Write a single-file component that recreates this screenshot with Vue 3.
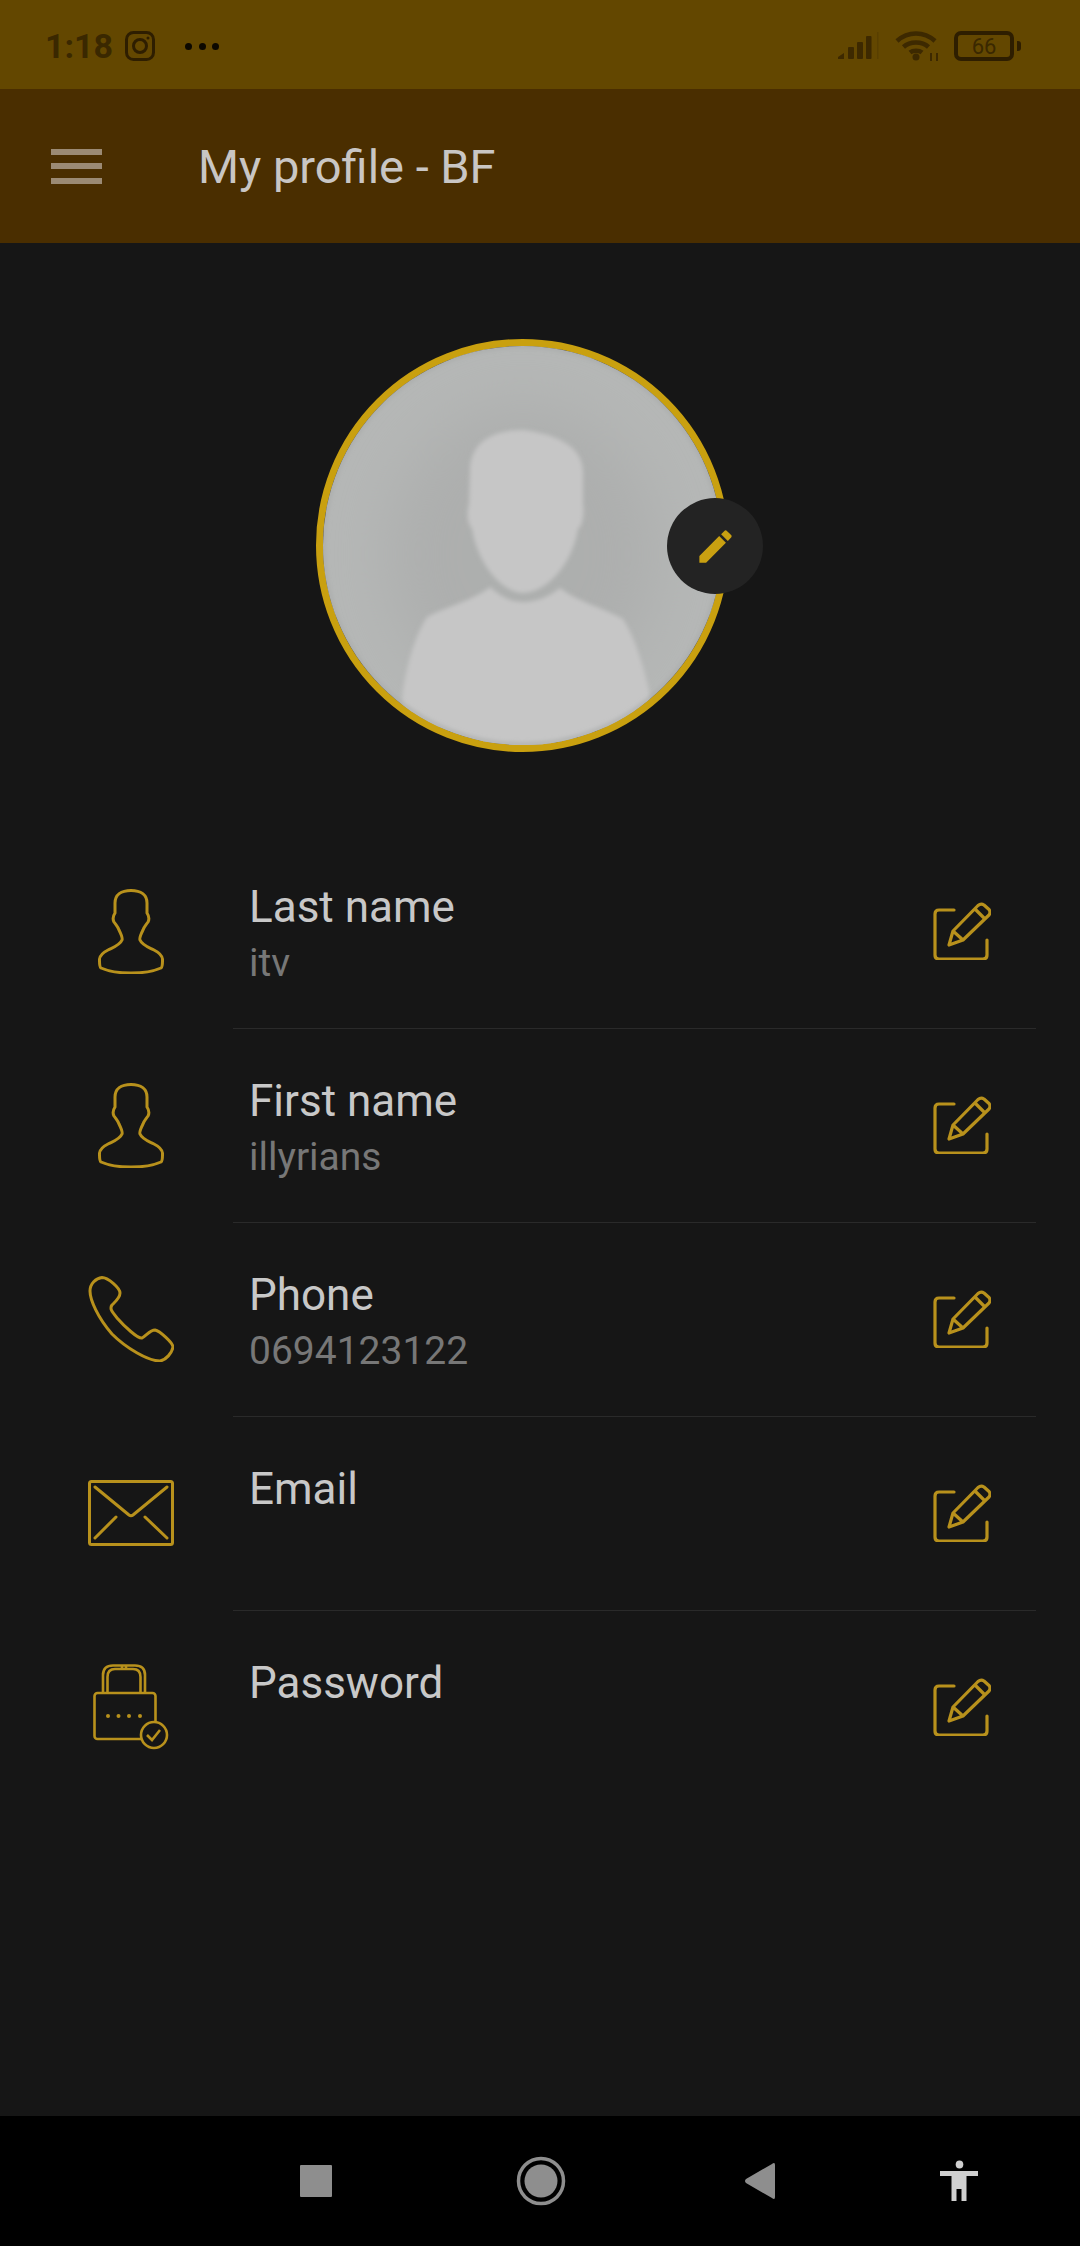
<template>
  <div class="screen">
    <!-- status bar -->
    <div class="status-bar">
      <div class="status-left">
        <span class="time">1:18</span>
        <svg class="insta" width="30" height="30" viewBox="0 0 30 30" fill="none" stroke="#2e1e00" stroke-width="3">
          <rect x="1.5" y="1.5" width="27" height="27" rx="7" />
          <circle cx="15" cy="15" r="6.5" />
          <circle cx="23" cy="7" r="1.5" fill="#2e1e00" stroke="none" />
        </svg>
        <span class="dots"><i></i><i></i><i></i></span>
      </div>
      <div class="status-right">
        <svg width="42" height="28" viewBox="0 0 42 28" fill="#3d2900">
          <path d="M0 25 L6 21 V27 H0 Z" />
          <rect x="10" y="15" width="6" height="12" rx="1" />
          <rect x="19" y="10" width="6" height="17" rx="1" />
          <rect x="28" y="4" width="5.500" height="23" rx="1" />
          <rect x="39" y="0" width="1.500" height="27" opacity="0.25" />
        </svg>
        <svg class="wifi" width="44" height="30" viewBox="0 0 44 30" fill="none" stroke="#3d2900" stroke-width="4.500">
          <path d="M2 10 C13 0 29 0 40 10" />
          <path d="M8.500 16 C15 10 27 10 33.500 16" />
          <path d="M15 21.500 C18 19 24 19 27 21.500" />
          <circle cx="21" cy="26" r="3.500" fill="#3d2900" stroke="none" />
          <path d="M36 30 V22 M42 30 V22" stroke-width="2" />
        </svg>
        <div class="battery"><span>66</span></div>
        <div class="battery-nub"></div>
      </div>
    </div>

    <!-- app bar -->
    <div class="app-bar">
      <div class="menu"><i></i><i></i><i></i></div>
      <span class="title">My profile - BF</span>
    </div>

    <div class="content">
      <div class="avatar">
        <div class="avatar-img">
          <svg width="399" height="399" viewBox="7 7 399 399">
            <defs>
              <filter id="soft"><feGaussianBlur stdDeviation="2.200" /></filter>
              <filter id="softer" x="-40%" y="-40%" width="180%" height="180%"><feGaussianBlur stdDeviation="30" /></filter>
            </defs>
            <rect x="0" y="0" width="413" height="413" fill="#b5b7b6" />
            <ellipse cx="207" cy="215" rx="135" ry="150" fill="#adafae" filter="url(#softer)" />
            <g fill="#c6c6c6" filter="url(#soft)">
              <path d="M207 91 C178 91 154 102 154 132 L153 165 C150 175 152 185 156 190 C162 225 185 253 207 254 C232 253 256 225 262 190 C268 185 268 170 267 165 L267 132 C266 107 240 95 207 91 Z" />
              <path d="M174 248 C185 258 195 263 207 263 C222 263 235 256 244 249 C260 262 285 268 307 280 C320 300 328 330 333 351 L340 420 L80 420 L87 351 C92 320 100 295 111 278 C130 268 160 260 174 248 Z" />
            </g>
            <circle cx="206.500" cy="206.500" r="199" fill="none" stroke="#a9abaa" stroke-width="3" filter="url(#soft)" />
          </svg>
        </div>
        <button class="avatar-edit">
          <svg width="43" height="43" viewBox="0 0 24 24" fill="#c9a011">
            <path d="M3 17.250V21h3.750L17.810 9.940l-3.750-3.750L3 17.250zM20.710 7.040c.39-.39.39-1.020 0-1.410l-2.340-2.340c-.39-.39-1.020-.39-1.410 0l-1.830 1.830 3.750 3.750 1.830-1.830z" />
          </svg>
        </button>
      </div>

      <!-- profile fields -->
      <div class="field-list">
        <div v-for="field in fields" :key="field.label" class="field">
          <div class="field-icon">
            <svg v-if="field.icon === 'person'" width="66" height="85" viewBox="0 0 66 85" class="line-icon" stroke-width="3">
              <path d="M33 1.500 C23 1.500 17 6 17 14 L17 24 C15 27 15 31 16 33 C18 36 20 38 21 41 C23 45 25 49 24 51 C22 56 16 58 10 61 C4 64 1 68 1.500 72 C1.500 76 1.500 78 3 79 C12 83 22 84 33 84 C44 84 54 83 63 79 C64.500 78 64.500 76 64.500 72 C65 68 62 64 56 61 C50 58 44 56 42 51 C41 49 43 45 45 41 C46 38 48 36 50 33 C51 31 51 27 49 24 L49 14 C49 6 43 1.500 33 1.500 Z" />
            </svg>
            <svg v-else-if="field.icon === 'phone'" width="86" height="86" viewBox="0 0 86 86" class="line-icon" stroke-width="3">
              <path d="M14 1.500 C8 2 2 8 2 15 C2 24 10 42 24 58 C38 72 60 85 72 85 C78 84 84 77 85 71 C85 67 72 55 67 54 C62 54 58 60 54 62 C50 63 36 50 30 43 C25 37 21 33 24 29 C27 26 32 22 32 17 C32 12 20 1.500 14 1.500 Z" />
            </svg>
            <svg v-else-if="field.icon === 'mail'" width="86" height="66" viewBox="0 0 86 66" class="line-icon" stroke-width="3" stroke-linecap="round">
              <rect x="1.500" y="1.500" width="83" height="63" rx="2" />
              <path d="M7 7 L41 35 Q43 36.500 45 35 L79 7 M7 58 L28 37 M79 58 L57 37" />
            </svg>
            <svg v-else width="76" height="86" viewBox="0 0 76 86" class="line-icon lock" stroke-width="2.600">
              <rect x="1.500" y="29" width="61" height="46" rx="3" />
              <path d="M10 29 V11 Q10 1.500 20 1.500 H42 Q52 1.500 52 11 V29 M14.500 29 V13 Q14.500 5 22 5 H40 Q47.500 5 47.500 13 V29 M29 1.500 V5 M33 1.500 V5" />
              <circle cx="61" cy="71" r="13" class="lock-badge" />
              <path d="M54 71 L59 76 L67 66" />
              <g class="lock-dots">
                <circle cx="15" cy="52" r="2" />
                <circle cx="25.500" cy="52" r="2" />
                <circle cx="36" cy="52" r="2" />
                <circle cx="47" cy="52" r="2" />
              </g>
            </svg>
          </div>
          <div class="field-body">
            <div class="field-text">
              <div class="field-label">{{ field.label }}</div>
              <div class="field-value">{{ field.value }}</div>
            </div>
            <svg class="line-icon field-edit" width="58" height="58" viewBox="0 0 58 58" stroke-width="3.200">
              <path d="M21 8 H6 Q2 8 2 12 V53 Q2 57 6 57 H50 Q54 57 54 53 V38" stroke-linecap="round" />
              <path d="M16 43 L20 29 L45 3.500 Q48 1 51 3 L56 7.500 Q58 10 56 13 L30 38 Z M42 7 L52 17 M20 29 L30 38" stroke-linejoin="round" />
            </svg>
          </div>
        </div>
      </div>
    </div>

    <!-- system nav -->
    <div class="nav-bar">
      <div class="nav-item"><div class="nav-square"></div></div>
      <div class="nav-item">
        <svg width="50" height="50" viewBox="0 0 50 50">
          <circle cx="25" cy="25" r="22.500" fill="none" stroke="#8e8e8e" stroke-width="3.500" />
          <circle cx="25" cy="25" r="16.500" fill="#8e8e8e" />
        </svg>
      </div>
      <div class="nav-item">
        <svg width="32" height="38" viewBox="0 0 32 38" fill="#8e8e8e">
          <path d="M30 1 Q31 1 31 3 V35 Q31 37 30 37 Q29 37 28 36 L2 21 Q0 19 2 17 L28 2 Q29 1 30 1 Z" />
        </svg>
      </div>
      <div class="nav-item">
        <svg width="38" height="42" viewBox="0 0 38 42" fill="#d0d0d0">
          <ellipse cx="19.500" cy="4.500" rx="3.800" ry="4" />
          <path d="M0 11 H38 V16 H26.500 V41 H21.500 V29 H16.500 V41 H11.500 V16 H0 Z" />
        </svg>
      </div>
    </div>
  </div>
</template>

<script setup>
const fields = [
  { icon: 'person', label: 'Last name', value: 'itv' },
  { icon: 'person', label: 'First name', value: 'illyrians' },
  { icon: 'phone', label: 'Phone', value: '0694123122' },
  { icon: 'mail', label: 'Email', value: '' },
  { icon: 'lock', label: 'Password', value: '' },
]
</script>

<style scoped>
.screen {
  width: 1080px;
  height: 2246px;
  display: flex;
  flex-direction: column;
  background: #161616;
  font-family: Roboto, "Liberation Sans", sans-serif;
  overflow: hidden;
}

.status-bar {
  height: 89px;
  flex-shrink: 0;
  background: #634700;
  display: flex;
  justify-content: space-between;
  align-items: center;
  padding: 3px 59px 0 45px;
  box-sizing: border-box;
}

.status-left {
  display: flex;
  align-items: center;
}

.time {
  font-size: 34px;
  font-weight: 700;
  color: #3a2800;
  margin-right: 12px;
}

.insta {
  margin-right: 30px;
}

.dots {
  display: flex;
  gap: 6.500px;
}

.dots i {
  width: 7px;
  height: 7px;
  border-radius: 50%;
  background: #0c0800;
}

.status-right {
  display: flex;
  align-items: center;
}

.wifi {
  margin: 0 15px;
}

.battery {
  width: 60px;
  height: 30px;
  box-sizing: border-box;
  border: 4px solid #2e1e00;
  border-radius: 7px;
  display: flex;
  align-items: center;
  justify-content: center;
  font-size: 22px;
  color: #3a2800;
}

.battery-nub {
  width: 4px;
  height: 10px;
  margin-left: 3px;
  border-radius: 0 3px 3px 0;
  background: #2e1e00;
}

.app-bar {
  height: 154px;
  flex-shrink: 0;
  background: #4a2e00;
  display: flex;
  align-items: center;
  padding-left: 51px;
  box-sizing: border-box;
}

.menu {
  width: 51px;
  display: flex;
  flex-direction: column;
  gap: 8.500px;
  margin-right: 96px;
}

.menu i {
  height: 6px;
  background: #9b8a74;
}

.title {
  font-size: 47px;
  color: #c9c6c4;
}

.content {
  flex: 1;
  padding-top: 96px;
}

.avatar {
  position: relative;
  width: 413px;
  height: 413px;
  margin-left: 316px;
}

.avatar-img {
  width: 413px;
  height: 413px;
  box-sizing: border-box;
  border: 7px solid #c9a00f;
  border-radius: 50%;
  overflow: hidden;
}

.avatar-img svg {
  display: block;
}

.avatar-edit {
  position: absolute;
  left: 351px;
  top: 159px;
  width: 96px;
  height: 96px;
  padding: 0;
  border: none;
  border-radius: 50%;
  background: #232323;
  display: flex;
  align-items: center;
  justify-content: center;
}

.field-list {
  margin-top: 83px;
}

.field {
  display: flex;
  height: 194px;
}

.field-icon {
  width: 174px;
  height: 192px;
  margin: 0 15px 0 44px;
  display: flex;
  align-items: center;
  justify-content: center;
}

.field-body {
  flex: 1;
  margin-right: 44px;
  padding: 0 45px 2px 16px;
  display: flex;
  align-items: center;
  justify-content: space-between;
  border-bottom: 1px solid #2a2a2a;
}

.field:last-child .field-body {
  border-bottom: none;
}

.field-text {
  align-self: flex-start;
  padding-top: 46px;
}

.field-label {
  font-size: 44px;
  line-height: 52px;
  color: #c8c8c8;
}

.field-value {
  margin-top: 7px;
  min-height: 46px;
  font-size: 39px;
  line-height: 46px;
  color: #777777;
}

.line-icon {
  fill: none;
  stroke: #b8911c;
}

.lock-badge {
  fill: #161616;
}

.lock-dots circle {
  fill: #b8911c;
  stroke: none;
}

.nav-bar {
  height: 130px;
  flex-shrink: 0;
  background: #000;
  display: grid;
  grid-template-columns: 225px 219px 199px 60px;
  align-items: center;
  padding-left: 286px;
  box-sizing: border-box;
}

.nav-item {
  width: 60px;
  height: 60px;
  display: flex;
  align-items: center;
  justify-content: center;
}

.nav-square {
  width: 32px;
  height: 32px;
  border-radius: 1px;
  background: #8e8e8e;
}
</style>

<style>
body {
  background: #161616;
}
</style>
